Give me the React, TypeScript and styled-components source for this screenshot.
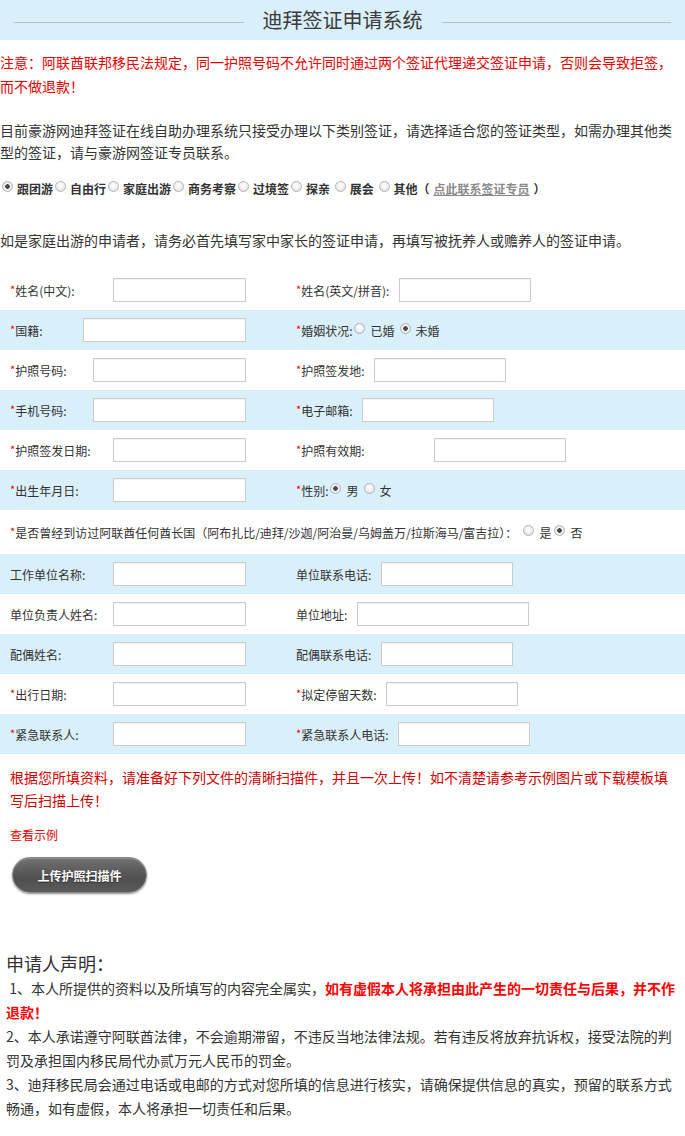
import React from "react";
import styled, { createGlobalStyle } from "styled-components";

const GlobalStyle = createGlobalStyle`
  html, body { margin: 0; padding: 0; background: #fff; }
  body {
    font-family: "Noto Sans CJK SC", "Microsoft YaHei", "Liberation Sans", sans-serif;
    color: #333;
  }
  * { box-sizing: border-box; }
`;

const Page = styled.div`
  width: 685px;
  padding-bottom: 20px;
`;

const Header = styled.header`
  height: 40px;
  background: #d9effa;
  display: flex;
  align-items: center;
  padding: 0 14px;
`;

const HeaderRule = styled.span`
  flex: 1;
  height: 1px;
  background: #bdbdbd;
  margin-top: 4px;
`;

const Title = styled.h1`
  margin: 0 19px;
  font-size: 20px;
  font-weight: normal;
  color: #3c3c3c;
  line-height: 1;
`;

const Notice = styled.p`
  margin: 10px 0 0;
  font-size: 14px;
  line-height: 24px;
  color: #e60000;
`;

const Intro = styled.p<{ $top: number }>`
  margin: ${(p) => p.$top}px 0 0;
  font-size: 14px;
  line-height: 22px;
  color: #333;
`;

const TypeRow = styled.div`
  margin-top: 15px;
  height: 20px;
  display: flex;
  align-items: center;
  font-size: 12px;
  font-weight: bold;
  color: #333;
  white-space: nowrap;
`;

const Choice = styled.span<{ $gap?: number; $lead?: number }>`
  display: inline-flex;
  align-items: center;
  gap: ${(p) => p.$gap ?? 5}px;
  margin-left: ${(p) => p.$lead ?? 0}px;
`;

const Radio = styled.span<{ $checked?: boolean }>`
  display: inline-block;
  width: 11px;
  height: 11px;
  flex-shrink: 0;
  border-radius: 50%;
  border: 1px solid #b3b3b3;
  margin-top: -4px;
  background: ${(p) =>
    p.$checked
      ? "radial-gradient(circle, #4a4a4a 0 2px, #f4f4f4 2.6px, #dadada 100%)"
      : "radial-gradient(circle at 50% 40%, #ffffff 0, #eeeeee 55%, #d4d4d4 100%)"};
`;

const ContactLink = styled.a`
  color: #8a8a8a;
  text-decoration: underline;
  margin: 0 4px;
`;

const Form = styled.div`
  margin-top: 19px;
`;

const FormRow = styled.div<{ $shade?: boolean; $h?: number }>`
  display: flex;
  align-items: center;
  height: ${(p) => p.$h ?? 40}px;
  padding-left: 10px;
  background: ${(p) => (p.$shade ? "#d9effa" : "transparent")};
  font-size: 12px;
  color: #333;
  white-space: nowrap;
`;

const LeftCell = styled.div`
  width: 286px;
  display: flex;
  align-items: center;
`;

const RightCell = styled.div`
  flex: 1;
  display: flex;
  align-items: center;
`;

const Label = styled.span<{ $w?: number }>`
  ${(p) => (p.$w ? `width: ${p.$w}px;` : "")}
  flex-shrink: 0;
  display: inline-flex;
  align-items: center;
`;

const Star = styled.span`
  color: #e60000;
  font-size: 11px;
  margin-top: -3px;
`;

const TextInput = styled.input<{ $w: number }>`
  width: ${(p) => p.$w}px;
  height: 24px;
  border: 1px solid #cbcbcb;
  background: #fff;
  padding: 0 4px;
  font: inherit;
  outline: none;
  box-shadow: inset 0 1px 1px rgba(0, 0, 0, 0.05);
`;

const Choices = styled.span<{ $gap?: number; $lead?: number }>`
  display: inline-flex;
  align-items: center;
  gap: ${(p) => p.$gap ?? 5}px;
  margin-left: ${(p) => p.$lead ?? 2}px;
`;

const Upload = styled.section`
  padding: 12px 10px 0;
`;

const UploadHint = styled.p`
  margin: 0;
  font-size: 14px;
  line-height: 23px;
  color: #d00000;
`;

const ExampleLink = styled.a`
  display: block;
  margin-top: 14px;
  font-size: 12px;
  line-height: 18px;
  color: #e60000;
  text-decoration: none;
`;

const UploadButton = styled.button`
  display: block;
  margin: 13px 0 0 2px;
  width: 135px;
  height: 36px;
  border-radius: 18px;
  border: 1px solid #8a8a8a;
  background: linear-gradient(#727272, #4f4f4f 60%, #5a5a5a);
  box-shadow: 0 1px 2px rgba(0, 0, 0, 0.45), inset 0 1px 0 rgba(255, 255, 255, 0.2);
  color: #fff;
  font-family: inherit;
  font-size: 12px;
  font-weight: bold;
  text-shadow: 0 1px 1px rgba(0, 0, 0, 0.5);
  cursor: pointer;
`;

const Declaration = styled.section`
  margin-top: 59px;
  padding: 0 8px 0 6px;
  color: #333;
`;

const DeclTitle = styled.h2`
  margin: 0 0 2px;
  font-size: 18px;
  font-weight: normal;
  line-height: 22px;
  color: #333;
`;

const DeclItem = styled.p`
  margin: 0;
  font-size: 14px;
  line-height: 24px;
`;

const Strong = styled.strong`
  color: #ff0000;
  font-weight: bold;
`;

type FieldProps = {
  label: string;
  required?: boolean;
  labelWidth: number;
  inputWidth: number;
};

const Field = ({ label, required, labelWidth, inputWidth }: FieldProps) => (
  <>
    <Label $w={labelWidth}>
      {required && <Star>*</Star>}
      {label}
    </Label>
    <TextInput $w={inputWidth} type="text" />
  </>
);

const travelTypes = [
  { t: "跟团游", checked: true },
  { t: "自由行" },
  { t: "家庭出游" },
  { t: "商务考察" },
  { t: "过境签" },
  { t: "探亲\u00a0" },
  { t: "展会\u00a0" },
  { t: "其他" },
];

export default function App() {
  return (
    <Page>
      <GlobalStyle />
      <Header>
        <HeaderRule />
        <Title>迪拜签证申请系统</Title>
        <HeaderRule />
      </Header>

      <Notice>
        注意：阿联酋联邦移民法规定，同一护照号码不允许同时通过两个签证代理递交签证申请，否则会导致拒签，而不做退款！
      </Notice>

      <Intro $top={21}>
        目前豪游网迪拜签证在线自助办理系统只接受办理以下类别签证，请选择适合您的签证类型，如需办理其他类型的签证，请与豪游网签证专员联系。
      </Intro>

      <TypeRow>
        {travelTypes.map((o) => (
          <Choice key={o.t} $gap={4} $lead={2}>
            <Radio $checked={o.checked} />
            {o.t}
          </Choice>
        ))}
        <span>（</span>
        <ContactLink>点此联系签证专员</ContactLink>
        <span>）</span>
      </TypeRow>

      <Intro $top={31}>
        如是家庭出游的申请者，请务必首先填写家中家长的签证申请，再填写被抚养人或赡养人的签证申请。
      </Intro>

      <Form>
        <FormRow>
          <LeftCell>
            <Field required label="姓名(中文):" labelWidth={103} inputWidth={133} />
          </LeftCell>
          <RightCell>
            <Field required label="姓名(英文/拼音):" labelWidth={103} inputWidth={132} />
          </RightCell>
        </FormRow>
        <FormRow $shade>
          <LeftCell>
            <Field required label="国籍:" labelWidth={73} inputWidth={163} />
          </LeftCell>
          <RightCell>
            <Label>
              <Star>*</Star>婚姻状况:
            </Label>
            <Choices $gap={5} $lead={2}>
              <Choice>
                <Radio />
                已婚
              </Choice>
              <Choice>
                <Radio $checked />
                未婚
              </Choice>
            </Choices>
          </RightCell>
        </FormRow>
        <FormRow>
          <LeftCell>
            <Field required label="护照号码:" labelWidth={83} inputWidth={153} />
          </LeftCell>
          <RightCell>
            <Field required label="护照签发地:" labelWidth={78} inputWidth={132} />
          </RightCell>
        </FormRow>
        <FormRow $shade>
          <LeftCell>
            <Field required label="手机号码:" labelWidth={83} inputWidth={153} />
          </LeftCell>
          <RightCell>
            <Field required label="电子邮箱:" labelWidth={66} inputWidth={132} />
          </RightCell>
        </FormRow>
        <FormRow>
          <LeftCell>
            <Field required label="护照签发日期:" labelWidth={103} inputWidth={133} />
          </LeftCell>
          <RightCell>
            <Field required label="护照有效期:" labelWidth={138} inputWidth={132} />
          </RightCell>
        </FormRow>
        <FormRow $shade>
          <LeftCell>
            <Field required label="出生年月日:" labelWidth={103} inputWidth={133} />
          </LeftCell>
          <RightCell>
            <Label>
              <Star>*</Star>性别:
            </Label>
            <Choices $gap={5} $lead={2}>
              <Choice>
                <Radio $checked />男
              </Choice>
              <Choice>
                <Radio />女
              </Choice>
            </Choices>
          </RightCell>
        </FormRow>
        <FormRow $h={44}>
          <Label>
            <Star>*</Star>
            是否曾经到访过阿联酋任何酋长国（阿布扎比/迪拜/沙迦/阿治曼/乌姆盖万/拉斯海马/富吉拉）：
          </Label>
          <Choices $gap={3} $lead={6}>
            <Choice>
              <Radio />是
            </Choice>
            <Choice>
              <Radio $checked />否
            </Choice>
          </Choices>
        </FormRow>
        <FormRow $shade>
          <LeftCell>
            <Field label="工作单位名称:" labelWidth={103} inputWidth={133} />
          </LeftCell>
          <RightCell>
            <Field label="单位联系电话:" labelWidth={85} inputWidth={132} />
          </RightCell>
        </FormRow>
        <FormRow>
          <LeftCell>
            <Field label="单位负责人姓名:" labelWidth={103} inputWidth={133} />
          </LeftCell>
          <RightCell>
            <Field label="单位地址:" labelWidth={61} inputWidth={172} />
          </RightCell>
        </FormRow>
        <FormRow $shade>
          <LeftCell>
            <Field label="配偶姓名:" labelWidth={103} inputWidth={133} />
          </LeftCell>
          <RightCell>
            <Field label="配偶联系电话:" labelWidth={85} inputWidth={132} />
          </RightCell>
        </FormRow>
        <FormRow>
          <LeftCell>
            <Field required label="出行日期:" labelWidth={103} inputWidth={133} />
          </LeftCell>
          <RightCell>
            <Field required label="拟定停留天数:" labelWidth={90} inputWidth={132} />
          </RightCell>
        </FormRow>
        <FormRow $shade>
          <LeftCell>
            <Field required label="紧急联系人:" labelWidth={103} inputWidth={133} />
          </LeftCell>
          <RightCell>
            <Field required label="紧急联系人电话:" labelWidth={102} inputWidth={132} />
          </RightCell>
        </FormRow>
      </Form>

      <Upload>
        <UploadHint>
          根据您所填资料，请准备好下列文件的清晰扫描件，并且一次上传！如不清楚请参考示例图片或下载模板填写后扫描上传！
        </UploadHint>
        <ExampleLink>查看示例</ExampleLink>
        <UploadButton type="button">上传护照扫描件</UploadButton>
      </Upload>

      <Declaration>
        <DeclTitle>申请人声明：</DeclTitle>
        <DeclItem>
          &nbsp;1、本人所提供的资料以及所填写的内容完全属实，
          <Strong>如有虚假本人将承担由此产生的一切责任与后果，并不作</Strong>
          <Strong>退款！</Strong>
        </DeclItem>
        <DeclItem>
          2、本人承诺遵守阿联酋法律，不会逾期滞留，不违反当地法律法规。若有违反将放弃抗诉权，接受法院的判罚及承担国内移民局代办贰万元人民币的罚金。
        </DeclItem>
        <DeclItem>
          3、迪拜移民局会通过电话或电邮的方式对您所填的信息进行核实，请确保提供信息的真实，预留的联系方式畅通，如有虚假，本人将承担一切责任和后果。
        </DeclItem>
      </Declaration>
    </Page>
  );
}
